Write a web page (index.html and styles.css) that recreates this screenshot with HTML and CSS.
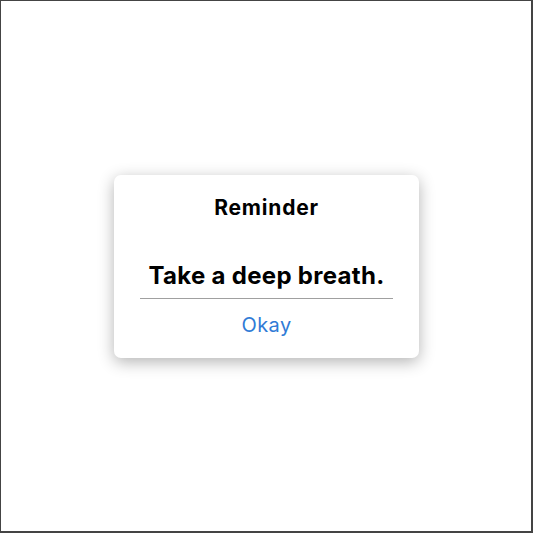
FILE: index.html
```html
<!DOCTYPE html>
<html>
<head>
<meta charset="utf-8">
<link rel="stylesheet" href="styles.css">
</head>
<body>
<div class="frame">
  <div class="alert">
    <div class="title">Reminder</div>
    <div class="message">Take a deep breath.</div>
    <div class="divider"></div>
    <div class="action">Okay</div>
  </div>
</div>
</body>
</html>
```
FILE: styles.css
```css
html, body {
  margin: 0;
  padding: 0;
  background: #fff;
}
.frame {
  box-sizing: border-box;
  width: 533px;
  height: 533px;
  border-top: 1px solid #444;
  border-left: 1px solid #444;
  border-right: 2px solid #444;
  border-bottom: 2px solid #444;
  display: flex;
  align-items: center;
  justify-content: center;
  font-family: Inter, "Liberation Sans", sans-serif;
}
.alert {
  box-sizing: border-box;
  width: 305px;
  height: 183px;
  margin-left: 1px;
  background: #fff;
  border-radius: 7px;
  box-shadow: 0 4px 16px rgba(0, 0, 0, 0.3);
  padding: 21px 26px 0;
  display: flex;
  flex-direction: column;
  align-items: stretch;
  text-align: center;
}
.title {
  font-size: 21px;
  line-height: 24px;
  font-weight: 700;
  letter-spacing: 0.8px;
  color: #000;
}
.message {
  margin-top: 42px;
  font-size: 24px;
  line-height: 28px;
  font-weight: 700;
  letter-spacing: 0.3px;
  color: #000;
}
.divider {
  margin-top: 8px;
  height: 1px;
  background: #a0a0a0;
}
.action {
  margin-top: 14px;
  font-size: 20px;
  line-height: 24px;
  letter-spacing: 0.4px;
  color: #2f7bd6;
}
```
